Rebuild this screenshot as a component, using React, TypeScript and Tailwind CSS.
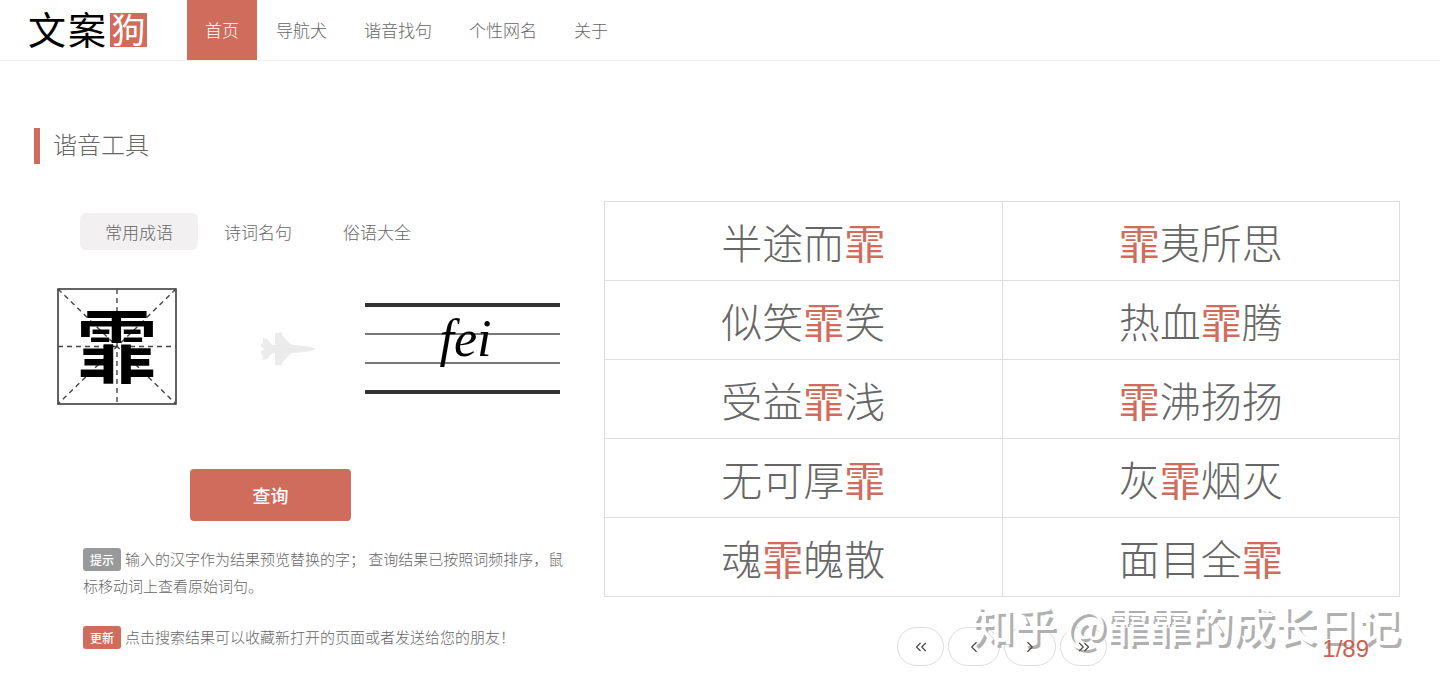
import { useState } from 'react';
import { ChevronLeft, ChevronRight, ChevronsLeft, ChevronsRight } from 'lucide-react';

const NAV = ['首页', '导航犬', '谐音找句', '个性网名', '关于'];
const TABS = ['常用成语', '诗词名句', '俗语大全'];

const ROWS = [
  ['半途而霏', '霏夷所思'],
  ['似笑霏笑', '热血霏腾'],
  ['受益霏浅', '霏沸扬扬'],
  ['无可厚霏', '灰霏烟灭'],
  ['魂霏魄散', '面目全霏'],
];

const PAGER = [
  { label: '第一页', icon: ChevronsLeft, width: 'w-[47px]' },
  { label: '上一页', icon: ChevronLeft, width: 'w-[52px]' },
  { label: '下一页', icon: ChevronRight, width: 'w-[52px]' },
  { label: '最后一页', icon: ChevronsRight, width: 'w-[47px]' },
];

function Logo() {
  return (
    <a href="#" className="ml-7 mr-10 flex items-center gap-0.5 text-[38px] leading-[34px] text-black">
      <span className="pb-1 font-normal">文</span>
      <span className="pb-1 font-normal">案</span>
      <span className="ml-0.5 h-[34px] w-[37px] bg-[#d06c5c] text-center text-[34px] leading-[31px] font-normal text-white">
        狗
      </span>
    </a>
  );
}

function Jet() {
  return (
    <svg viewBox="0 0 56 34" className="ml-[83px] mr-[49px] mt-1 h-[34px] w-14 shrink-0 fill-[#ebebeb]">
      <path d="M15 1 L21 0.5 C22.500 0.5 22.500 2 21.500 2.500 L29 11 C31 12.500 33 13 36 13.200 L47 14.500 C51 15 55 16 56 17 C55 18 51 19 47 19.500 L36 20.800 C33 21 31 21.500 29 23 L21.500 31.500 C22.500 32 22.500 33.500 21 33.500 L15 33 L15 21 L12 21.500 L7 27 L3 28 L3 23.500 L1 22 L1 19 L5 17 L1 15 L1 12 L3 10.500 L3 6 L7 7 L12 12.500 L15 13 Z" />
    </svg>
  );
}

function CharBox({ value, onChange }: { value: string; onChange: (v: string) => void }) {
  return (
    <div className="relative h-[117px] w-[120px] shrink-0">
      <svg viewBox="0 0 120 117" className="h-full w-full" fill="none" stroke="#444" strokeWidth="1.4">
        <rect x="1" y="1" width="118" height="115" stroke="#222" />
        <path strokeDasharray="5 4" d="M60 1V116M1 58.500H119M1 1L119 116M119 1L1 116" />
      </svg>
      <input
        aria-label="汉字"
        value={value}
        onChange={(e) => onChange(e.target.value)}
        className="absolute inset-x-0 -top-1.5 h-full w-full bg-transparent text-center text-[80px] font-bold text-black outline-none"
      />
    </div>
  );
}

function Pinyin({ value, onChange }: { value: string; onChange: (v: string) => void }) {
  return (
    <div className="relative mt-1 h-[92px] w-[195px] shrink-0">
      <div className="flex h-full flex-col justify-between">
        <div className="h-1 bg-[#333]" />
        <div className="h-0.5 bg-[#777]" />
        <div className="h-0.5 bg-[#777]" />
        <div className="h-1 bg-[#333]" />
      </div>
      <input
        aria-label="拼音"
        value={value}
        onChange={(e) => onChange(e.target.value)}
        className="absolute inset-x-0 top-1 h-16 w-full bg-transparent pl-1.5 text-center font-['Liberation_Serif',serif] text-[52px] italic text-black outline-none"
      />
    </div>
  );
}

function Idiom({ text, mark }: { text: string; mark: string }) {
  return (
    <>
      {text.split('').map((c, i) => (
        <span key={i} className={c === mark ? 'font-normal text-[#d06c5c]' : undefined}>
          {c}
        </span>
      ))}
    </>
  );
}

export default function App() {
  const [tab, setTab] = useState(0);
  const [char, setChar] = useState('霏');
  const [pinyin, setPinyin] = useState('fei');

  return (
    <div className="bg-white font-['Noto_Sans_CJK_SC',sans-serif] font-light text-[#666]">
      <header className="flex h-[61px] border-b border-[#eee]">
        <Logo />
        <nav className="flex gap-px text-[17px]">
          {NAV.map((n, i) => (
            <a
              key={n}
              href="#"
              className={`flex items-center px-[18px] ${i === 0 ? 'bg-[#d06c5c] text-white' : ''}`}
            >
              {n}
            </a>
          ))}
        </nav>
      </header>

      <h1 className="ml-[34px] mt-[67px] h-9 border-l-[6px] border-[#d06c5c] pl-[13px] text-2xl leading-8 font-light">
        谐音工具
      </h1>

      <main className="mt-[37px] grid grid-cols-[564fr_796fr] px-10">
        <section className="pt-3">
          <div className="ml-10 flex gap-px text-[17px]">
            {TABS.map((t, i) => (
              <button
                key={t}
                onClick={() => setTab(i)}
                className={`h-[37px] rounded-md px-[25px] ${tab === i ? 'bg-[#f2f0f1]' : ''}`}
              >
                {t}
              </button>
            ))}
          </div>

          <div className="ml-[17px] mt-[38px] flex items-center">
            <CharBox value={char} onChange={setChar} />
            <Jet />
            <Pinyin value={pinyin} onChange={setPinyin} />
          </div>

          <button className="ml-[150px] mt-16 h-[52px] w-[161px] rounded bg-[#d06c5c] text-lg font-medium text-white">
            查询
          </button>

          <div className="ml-[43px] mr-[30px] mt-6 space-y-6 text-[15px] leading-[27px]">
            <p>
              <span className="mr-1 inline-block rounded-[3px] bg-[#999] px-[7px] text-xs leading-[23px] font-medium text-white">
                提示
              </span>
              输入的汉字作为结果预览替换的字； 查询结果已按照词频排序，鼠标移动词上查看原始词句。
            </p>
            <p>
              <span className="mr-1 inline-block rounded-[3px] bg-[#d06c5c] px-[7px] text-xs leading-[23px] font-medium text-white">
                更新
              </span>
              点击搜索结果可以收藏新打开的页面或者发送给您的朋友！
            </p>
          </div>
        </section>

        <section>
          <table className="w-full table-fixed border-collapse text-center text-[41px] leading-[78px]">
            <tbody>
              {ROWS.map((row) => (
                <tr key={row[0]}>
                  {row.map((text) => (
                    <td key={text} className="border border-[#ddd]">
                      <Idiom text={text} mark="霏" />
                    </td>
                  ))}
                </tr>
              ))}
            </tbody>
          </table>

          <div className="relative mt-[30px] grid grid-cols-[1fr_auto_1fr] items-center">
            <div className="col-start-2 flex gap-1 text-[#444]">
              {PAGER.map(({ label, icon: Icon, width }) => (
                <button
                  key={label}
                  aria-label={label}
                  className={`flex h-[39px] items-center justify-center rounded-[20px] border border-[#ddd] ${width}`}
                >
                  <Icon size={18} strokeWidth={1.5} className="z-10" />
                </button>
              ))}
            </div>
            <span className="z-10 mr-[31px] mt-1 justify-self-end font-['Liberation_Sans',sans-serif] text-2xl text-[#cb5f54]">
              1/89
            </span>
            <div className="pointer-events-none absolute -top-6 right-0 whitespace-nowrap text-[42px] leading-[42px] font-medium text-white [text-shadow:3px_3px_0_#b0b0b0]">
              知乎 @霏霏的成长日记
            </div>
          </div>
        </section>
      </main>
    </div>
  );
}
